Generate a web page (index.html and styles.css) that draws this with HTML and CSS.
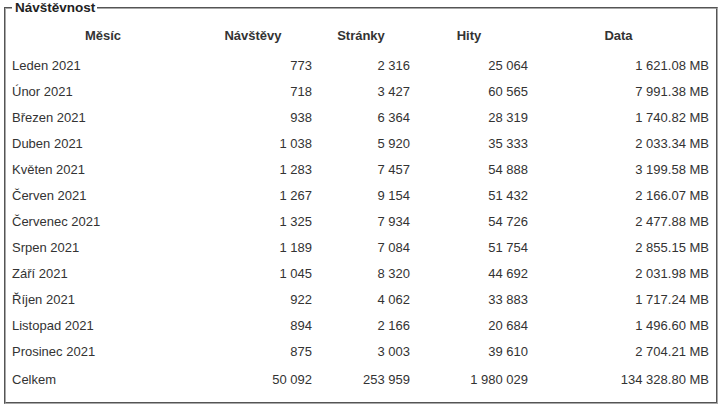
FILE: index.html
```html
<!DOCTYPE html>
<html lang="cs">
<head>
<meta charset="utf-8">
<title>Návštěvnost</title>
<link rel="stylesheet" href="styles.css">
</head>
<body>
<fieldset class="stats">
  <legend class="stats-title">Návštěvnost</legend>
  <table class="stats-table">
    <colgroup>
      <col class="c-month"><col class="c-visits"><col class="c-pages"><col class="c-hits"><col class="c-data">
    </colgroup>
    <thead>
      <tr><th>Měsíc</th><th>Návštěvy</th><th>Stránky</th><th>Hity</th><th>Data</th></tr>
    </thead>
    <tbody>
      <tr><td>Leden 2021</td><td>773</td><td>2 316</td><td>25 064</td><td>1 621.08 MB</td></tr>
      <tr><td>Únor 2021</td><td>718</td><td>3 427</td><td>60 565</td><td>7 991.38 MB</td></tr>
      <tr><td>Březen 2021</td><td>938</td><td>6 364</td><td>28 319</td><td>1 740.82 MB</td></tr>
      <tr><td>Duben 2021</td><td>1 038</td><td>5 920</td><td>35 333</td><td>2 033.34 MB</td></tr>
      <tr><td>Květen 2021</td><td>1 283</td><td>7 457</td><td>54 888</td><td>3 199.58 MB</td></tr>
      <tr><td>Červen 2021</td><td>1 267</td><td>9 154</td><td>51 432</td><td>2 166.07 MB</td></tr>
      <tr><td>Červenec 2021</td><td>1 325</td><td>7 934</td><td>54 726</td><td>2 477.88 MB</td></tr>
      <tr><td>Srpen 2021</td><td>1 189</td><td>7 084</td><td>51 754</td><td>2 855.15 MB</td></tr>
      <tr><td>Září 2021</td><td>1 045</td><td>8 320</td><td>44 692</td><td>2 031.98 MB</td></tr>
      <tr><td>Říjen 2021</td><td>922</td><td>4 062</td><td>33 883</td><td>1 717.24 MB</td></tr>
      <tr><td>Listopad 2021</td><td>894</td><td>2 166</td><td>20 684</td><td>1 496.60 MB</td></tr>
      <tr><td>Prosinec 2021</td><td>875</td><td>3 003</td><td>39 610</td><td>2 704.21 MB</td></tr>
    </tbody>
    <tfoot>
      <tr><td>Celkem</td><td>50 092</td><td>253 959</td><td>1 980 029</td><td>134 328.80 MB</td></tr>
    </tfoot>
  </table>
</fieldset>
</body>
</html>
```

FILE: styles.css
```css
html, body {
  margin: 0;
  padding: 0;
  background: #ffffff;
}

body {
  font-family: "Liberation Sans", Arial, sans-serif;
  font-size: 13px;
  color: #333333;
}

.stats {
  margin: 0 4px;
  padding: 4px 8px 9px 6px;
  border: 2px groove #a8a8a8;
  min-width: 0;
}

.stats-title {
  padding: 0 2px 0 3px;
  font-weight: bold;
  font-size: 13.5px;
  line-height: 15px;
  color: #222222;
}

.stats-table {
  width: 100%;
  border-collapse: collapse;
  table-layout: fixed;
}

.c-month { width: 182px; }
.c-visits { width: 118px; }
.c-pages { width: 98px; }
.c-hits { width: 118px; }
.c-data { width: 181px; }

.stats-table th {
  height: 33px;
  padding: 0;
  font-weight: bold;
  text-align: center;
  vertical-align: middle;
}

.stats-table td {
  height: 26px;
  padding: 0;
  text-align: right;
  vertical-align: middle;
  white-space: nowrap;
}

.stats-table td:first-child {
  text-align: left;
}

.stats-table tbody tr:last-child td {
  height: 27px;
}

.stats-table tfoot td {
  height: 28px;
}
```
